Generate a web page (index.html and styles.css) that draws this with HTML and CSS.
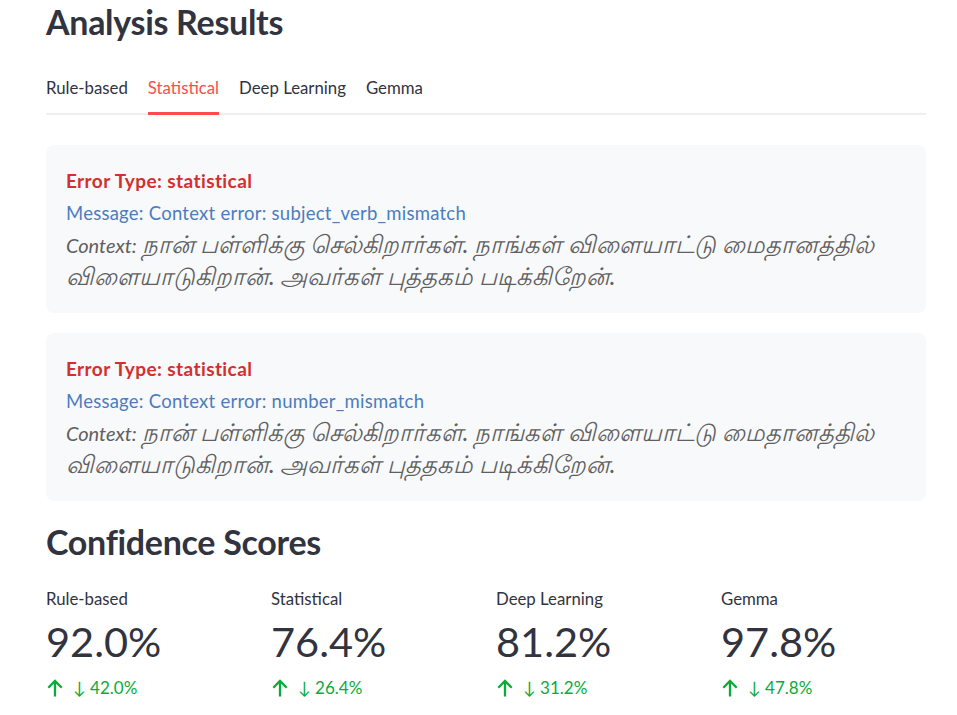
FILE: index.html
```html
<!DOCTYPE html>
<html lang="en">
<head>
<meta charset="utf-8">
<title>Analysis Results</title>
<link rel="stylesheet" href="styles.css">
</head>
<body>
<main class="page">
  <h2 class="heading">Analysis Results</h2>
  <div class="tabs">
    <div class="tab">Rule-based</div>
    <div class="tab active">Statistical</div>
    <div class="tab">Deep Learning</div>
    <div class="tab">Gemma</div>
  </div>
  <div class="panel">
    <div class="error-card">
      <div class="err-type">Error Type: statistical</div>
      <div class="err-msg">Message: Context error: subject_verb_mismatch</div>
      <div class="err-ctx">Context: <span class="ta">நான் பள்ளிக்கு செல்கிறார்கள். நாங்கள் விளையாட்டு மைதானத்தில் விளையாடுகிறான். அவர்கள் புத்தகம் படிக்கிறேன்.</span></div>
    </div>
    <div class="error-card">
      <div class="err-type">Error Type: statistical</div>
      <div class="err-msg">Message: Context error: number_mismatch</div>
      <div class="err-ctx">Context: <span class="ta">நான் பள்ளிக்கு செல்கிறார்கள். நாங்கள் விளையாட்டு மைதானத்தில் விளையாடுகிறான். அவர்கள் புத்தகம் படிக்கிறேன்.</span></div>
    </div>
  </div>
  <h2 class="heading scores-heading">Confidence Scores</h2>
  <div class="metrics">
    <div class="metric">
      <div class="m-label">Rule-based</div>
      <div class="m-value">92.0%</div>
      <div class="m-delta"><svg class="up" viewBox="0 0 16 18"><path d="M8 17.5V2M1.3 8.7L8 2l6.7 6.7" fill="none" stroke="currentColor" stroke-width="2.3"/></svg><span>↓ 42.0%</span></div>
    </div>
    <div class="metric">
      <div class="m-label">Statistical</div>
      <div class="m-value">76.4%</div>
      <div class="m-delta"><svg class="up" viewBox="0 0 16 18"><path d="M8 17.5V2M1.3 8.7L8 2l6.7 6.7" fill="none" stroke="currentColor" stroke-width="2.3"/></svg><span>↓ 26.4%</span></div>
    </div>
    <div class="metric">
      <div class="m-label">Deep Learning</div>
      <div class="m-value">81.2%</div>
      <div class="m-delta"><svg class="up" viewBox="0 0 16 18"><path d="M8 17.5V2M1.3 8.7L8 2l6.7 6.7" fill="none" stroke="currentColor" stroke-width="2.3"/></svg><span>↓ 31.2%</span></div>
    </div>
    <div class="metric">
      <div class="m-label">Gemma</div>
      <div class="m-value">97.8%</div>
      <div class="m-delta"><svg class="up" viewBox="0 0 16 18"><path d="M8 17.5V2M1.3 8.7L8 2l6.7 6.7" fill="none" stroke="currentColor" stroke-width="2.3"/></svg><span>↓ 47.8%</span></div>
    </div>
  </div>
</main>
</body>
</html>
```

FILE: styles.css
```css
html, body {
  margin: 0;
  padding: 0;
  background: #ffffff;
}
body {
  font-family: "Source Sans Pro", Lato, "Noto Sans", sans-serif;
  color: #31333f;
}
.page {
  width: 880px;
  margin-left: 46px;
}
.heading {
  margin: 0;
  font-size: 34px;
  font-weight: 700;
  line-height: 44px;
  letter-spacing: -0.3px;
}
.tabs {
  display: flex;
  gap: 20px;
  margin-top: 32px;
  border-bottom: 2px solid #eeeff2;
}
.tab {
  position: relative;
  font-size: 16.8px;
  line-height: 24px;
  padding-bottom: 13px;
}
.tab.active {
  color: #ff4b4b;
}
.tab.active::after {
  content: "";
  position: absolute;
  left: 0;
  right: 0;
  bottom: -2px;
  height: 3px;
  background: #ff4b4b;
}
.panel {
  display: flex;
  flex-direction: column;
  gap: 20px;
  margin-top: 30px;
}
.error-card {
  background: #f8f9fb;
  border-radius: 8px;
  padding: 20px;
  line-height: 32px;
}
.err-type {
  color: #d32f2f;
  font-weight: 700;
  font-size: 19px;
  letter-spacing: 0.4px;
}
.err-msg {
  color: #4a7dbf;
  font-size: 18.5px;
  letter-spacing: 0.25px;
}
.err-ctx {
  color: #5f5f5f;
  font-style: italic;
  font-size: 20px;
}
.ta {
  font-size: 24.3px;
  line-height: 20px;
}
.scores-heading {
  margin-top: 19px;
}
.metrics {
  display: grid;
  grid-template-columns: repeat(4, 1fr);
  gap: 20px;
  margin-top: 23px;
}
.m-label {
  font-size: 16.8px;
  line-height: 24px;
}
.m-value {
  font-size: 41.5px;
  line-height: 52px;
  margin-top: 4px;
}
.m-delta {
  display: flex;
  align-items: center;
  gap: 10px;
  color: #09ab3b;
  font-size: 17px;
  line-height: 24px;
  margin-top: 9px;
}
.up {
  width: 16px;
  height: 18px;
  margin-left: 1px;
}
```
